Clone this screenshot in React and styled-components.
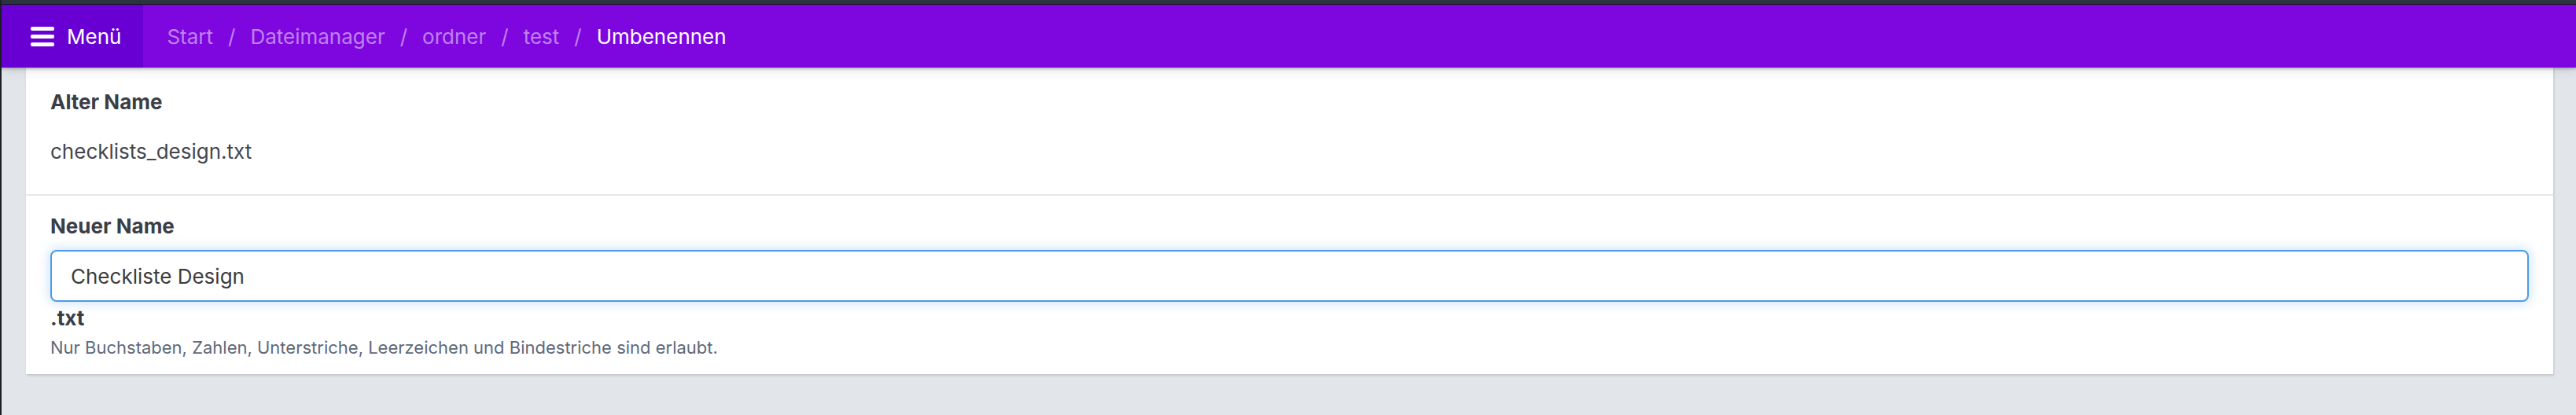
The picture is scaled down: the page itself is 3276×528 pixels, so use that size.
import styled, { createGlobalStyle } from "styled-components";

const GlobalStyle = createGlobalStyle`
  html, body {
    margin: 0;
    padding: 0;
    background: #e2e5ea;
  }

  body {
    font-family: Inter, "Noto Sans", "Liberation Sans", sans-serif;
    color: #3a3f47;
  }
`;

const Frame = styled.div`
  min-height: 528px;
  border-left: 2px solid #1d2126;
  background: #e2e5ea;
  box-sizing: border-box;
`;

const WindowBar = styled.div`
  height: 5px;
  background: #2c343e;
  border-bottom: 1px solid #14171b;
`;

const NavBar = styled.nav`
  position: relative;
  z-index: 2;
  display: flex;
  align-items: stretch;
  height: 80px;
  background: #7e06df;
  box-shadow: 0 2px 3px rgba(0, 0, 0, 0.22), 0 4px 14px rgba(0, 0, 0, 0.1);
`;

const MenuButton = styled.button`
  display: flex;
  align-items: center;
  gap: 16px;
  padding: 0 28px 0 37px;
  border: 0;
  background: #6900d3;
  color: #fff;
  font-family: inherit;
  font-size: 26px;
  cursor: pointer;
`;

const Crumbs = styled.ol`
  display: flex;
  align-items: center;
  margin: 0;
  padding: 0 0 0 30px;
  list-style: none;
  font-size: 26px;
`;

const Crumb = styled.li`
  color: ${(p) => (p.$current ? "#ffffff" : "rgba(255, 255, 255, 0.5)")};
`;

const Slash = styled.li`
  margin: 0 19px;
  color: rgba(255, 255, 255, 0.5);
`;

const Card = styled.main`
  position: relative;
  z-index: 1;
  margin: 0 29px 0 31px;
  background: #fff;
  box-shadow: 1px 2px 3px rgba(0, 0, 0, 0.14);
`;

const Section = styled.section`
  padding: ${(p) => p.$pad};
  border-top: ${(p) => (p.$divided ? "2px solid #e8e8e8" : "0")};
`;

const Label = styled.div`
  font-size: 26px;
  font-weight: 700;
  line-height: 36px;
  color: #3a3e46;
  margin-bottom: ${(p) => p.$gap || "0"};
`;

const Value = styled.div`
  font-size: 26px;
  line-height: 36px;
  color: #42464e;
`;

const NameInput = styled.input`
  display: block;
  width: 100%;
  height: 66px;
  box-sizing: border-box;
  padding: 0 24px;
  border: 2px solid #4d9be6;
  border-radius: 8px;
  outline: none;
  box-shadow: 0 0 14px 2px rgba(77, 155, 230, 0.28);
  font-family: inherit;
  font-size: 26px;
  color: #3c3c3c;
`;

const Extension = styled.div`
  margin-top: 3px;
  font-size: 26px;
  font-weight: 700;
  line-height: 36px;
  color: #3a3e46;
`;

const Hint = styled.p`
  margin: 4px 0 0;
  font-size: 22px;
  line-height: 30px;
  color: #5f6979;
`;

const BarsIcon = () => (
  <svg width="30" height="25" viewBox="0 0 30 25" aria-hidden="true">
    <rect x="0" y="0" width="30" height="5" rx="2" fill="#fff" />
    <rect x="0" y="10" width="30" height="5" rx="2" fill="#fff" />
    <rect x="0" y="20" width="30" height="5" rx="2" fill="#fff" />
  </svg>
);

const crumbs = ["Start", "Dateimanager", "ordner", "test"];

const App = () => {
  return (
    <>
      <GlobalStyle />
      <Frame>
        <WindowBar />
        <NavBar>
          <MenuButton>
            <BarsIcon />
            Menü
          </MenuButton>
          <Crumbs>
            {crumbs.flatMap((c) => [
              <Crumb key={c}>{c}</Crumb>,
              <Slash key={c + "-sep"}>/</Slash>,
            ])}
            <Crumb $current>Umbenennen</Crumb>
          </Crumbs>
        </NavBar>
        <Card>
          <Section $pad="26px 31px 36px">
            <Label $gap="27px">Alter Name</Label>
            <Value>checklists_design.txt</Value>
          </Section>
          <Section $divided $pad="21px 31px 19px">
            <Label $gap="12px">Neuer Name</Label>
            <NameInput defaultValue="Checkliste Design" />
            <Extension>.txt</Extension>
            <Hint>
              Nur Buchstaben, Zahlen, Unterstriche, Leerzeichen und Bindestriche
              sind erlaubt.
            </Hint>
          </Section>
        </Card>
      </Frame>
    </>
  );
};

export default App;
